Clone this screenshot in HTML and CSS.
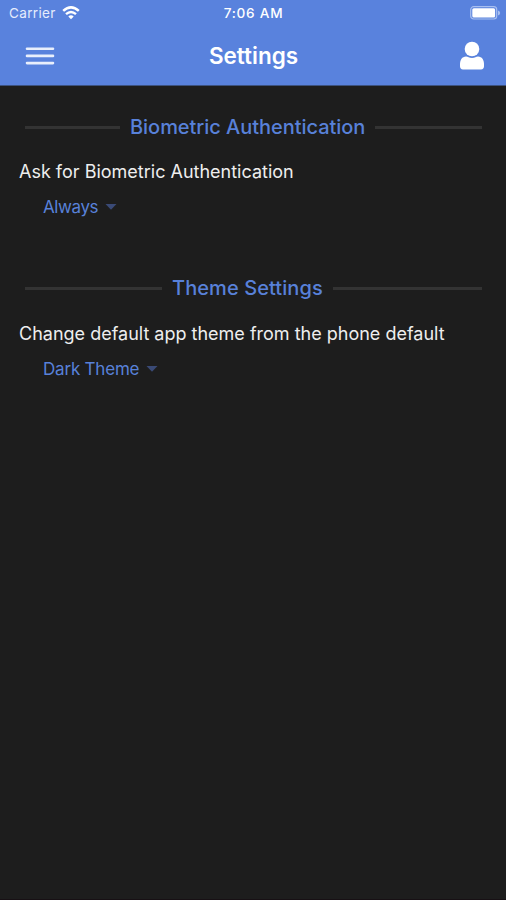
FILE: index.html
```
<!DOCTYPE html>
<html lang="en">
<head>
<meta charset="utf-8">
<title>Settings</title>
<link rel="stylesheet" href="styles.css">
</head>
<body>
<div class="screen">
  <header class="header">
    <div class="status">
      <div class="carrier"><span class="carrier-name">Carrier</span>
        <svg class="wifi" viewBox="0 0 18 14" width="18" height="14"><path d="M1.2 4.9Q9-2.1 16.8 4.9" fill="none" stroke="#fff" stroke-width="2.5"/><path d="M4 8.2Q9 3.8 14 8.2" fill="none" stroke="#fff" stroke-width="2.4"/><path d="M6.3 10.4Q9 8.2 11.7 10.4L9 13.3Z" fill="#fff"/></svg>
      </div>
      <span class="time">7:06 AM</span>
      <svg class="battery" viewBox="0 0 31 14" width="31" height="14"><rect x=".7" y=".7" width="26" height="12.3" rx="3" fill="none" stroke="#a8bff0" stroke-width="1.2"/><rect x="2.3" y="2.3" width="22.8" height="9.2" rx="1.5" fill="#fff"/><path d="M28 4.5Q30.2 5.3 30.2 7T28 9.5Z" fill="#a8bff0"/></svg>
    </div>
    <div class="navbar">
      <svg class="menu" viewBox="0 0 30 20" width="30" height="20"><path d="M2 2.7H28M2 9.9H28M2 17.1H28" stroke="#e9effc" stroke-width="2.6" stroke-linecap="round"/></svg>
      <h1 class="title">Settings</h1>
      <svg class="user" viewBox="0 0 26 30" width="26" height="30"><circle cx="13" cy="8" r="7.3" fill="#fff"/><path d="M7 15.4C9 15.4 10 17 13 17S17 15.4 19 15.4C23 15.4 25 19 25 23V25.3Q25 28.4 22 28.4H4Q1 28.4 1 25.3V23C1 19 3 15.4 7 15.4Z" fill="#fff"/></svg>
    </div>
  </header>
  <main class="content">
    <section class="group">
      <h2 class="divider"><span class="heading biometric">Biometric Authentication</span></h2>
      <p class="label">Ask for Biometric Authentication</p>
      <div class="select"><span class="always">Always</span><svg class="caret" viewBox="0 0 12 6" width="12" height="6"><path d="M.5 0H11.5L6 5.7Z" fill="#3a4a76"/></svg></div>
    </section>
    <section class="group">
      <h2 class="divider theme-divider"><span class="heading theme">Theme Settings</span></h2>
      <p class="label theme-label">Change default app theme from the phone default</p>
      <div class="select"><span class="dark">Dark Theme</span><svg class="caret" viewBox="0 0 12 6" width="12" height="6"><path d="M.5 0H11.5L6 5.7Z" fill="#3a4a76"/></svg></div>
    </section>
  </main>
</div>
</body>
</html>
```
FILE: styles.css
```
* { box-sizing: border-box; }
body { margin: 0; font-family: Inter, "Liberation Sans", sans-serif; background: #1d1d1d; }
h1, h2, p { margin: 0; }
svg { display: block; flex: none; }
span, h1, p { white-space: nowrap; }
.screen { height: 900px; background: #1d1d1d; border-bottom: 1px solid #171014; overflow: hidden; }
.header { height: 86px; background: #5982dd; border-bottom: 1px solid #3c527f; color: #fff; }
.status { display: grid; grid-template-columns: 1fr auto 1fr; align-items: center; height: 26px; padding: 0 7px 0 9px; }
.carrier { display: flex; align-items: center; gap: 6px; font-size: 13.5px; letter-spacing: .35px; color: #e5ecfc; }
.carrier-name { width: 47px; }
.time { margin-left: -1px; font-size: 13.6px; font-weight: 500; line-height: 16px; letter-spacing: .75px; }
.battery { justify-self: end; margin-right: -2px; }
.navbar { display: grid; grid-template-columns: 1fr auto 1fr; align-items: center; height: 60px; padding: 0 21px 0 25px; }
.title { margin-right: 1px; margin-left: -2px; font-size: 22.5px; font-weight: 600; line-height: 28px; }
.user { justify-self: end; }
.content { padding: 27px 24px 0 19px; }
.group { height: 161.5px; }
.divider { display: flex; align-items: center; gap: 10px; height: 28px; padding-left: 6px; font-size: 20px; font-weight: 500; color: #5881d9; }
.biometric { letter-spacing: -.04px; }
.theme { letter-spacing: .08px; }
.divider::before, .divider::after { content: ""; height: 3px; background: #333; }
.divider::before { width: 95px; }
.divider::after { flex: 1; }
.theme-divider { margin-top: -.5px; }
.theme-divider::before { width: 137px; }
.label { height: 28px; margin-top: 17px; font-size: 18px; line-height: 28px; color: #eee; }
.theme-label { margin-top: 18px; }
.select { display: flex; align-items: center; gap: 7px; height: 28px; margin-top: 7px; padding-left: 24px; font-size: 17px; color: #5881d9; }
.always { letter-spacing: -.4px; }
.dark { letter-spacing: -.2px; }
```
